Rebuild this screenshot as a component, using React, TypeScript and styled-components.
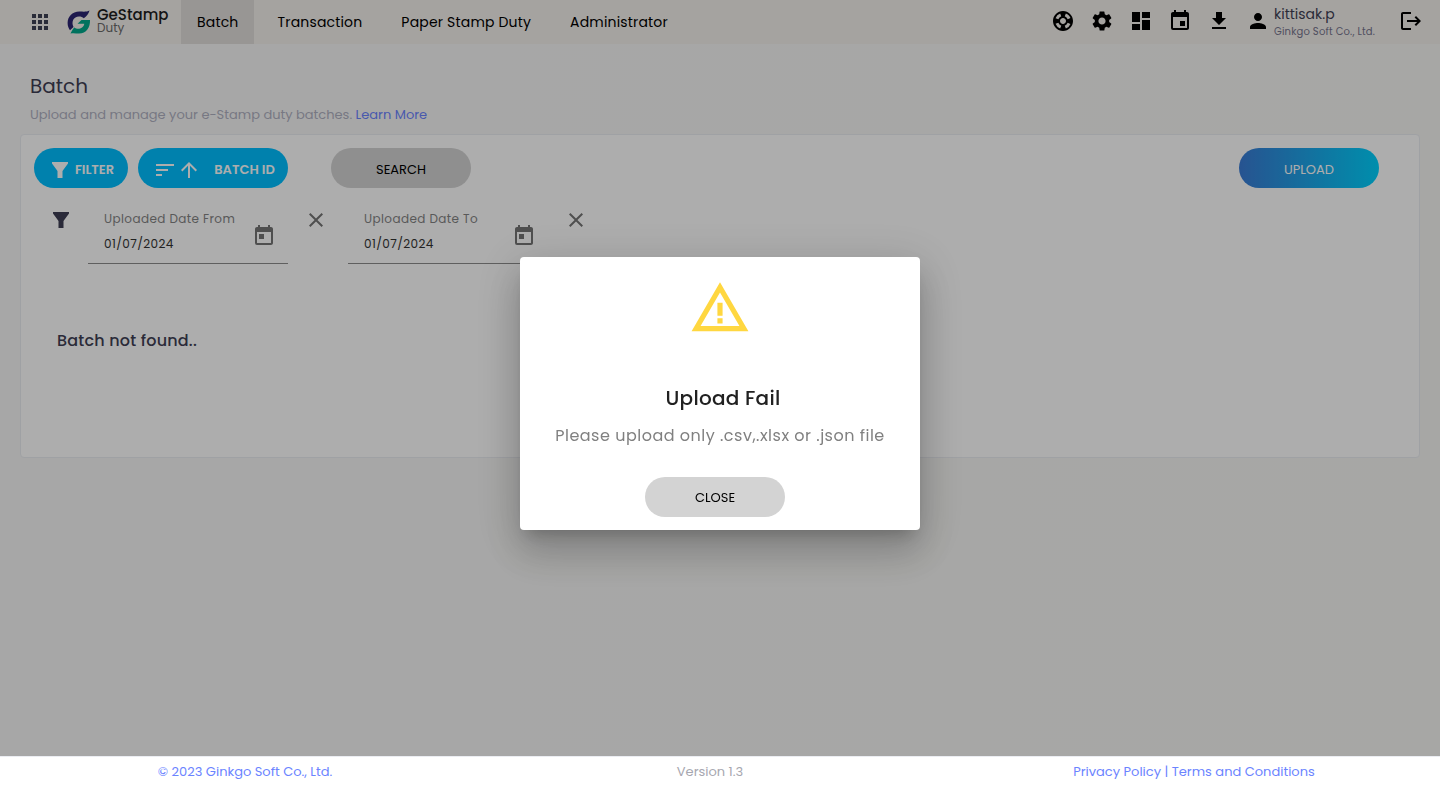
import React from "react";
import styled, { createGlobalStyle, css } from "styled-components";
import {
  MdApps, MdSettings, MdDashboard, MdEvent, MdFileDownload, MdPerson, MdLogout,
  MdSort, MdArrowUpward, MdToday, MdClose, MdOutlineSupport,
} from "react-icons/md";

const GlobalStyle = createGlobalStyle`
  *, *::before, *::after { box-sizing: border-box; }
  body { margin: 0; font-family: Poppins, Inter, "Open Sans", sans-serif; font-size: 13px; color: #3f3f54; }
  h1, h2, p { margin: 0; font-weight: 400; }
  button, input { font-family: inherit; }
  button { border: 0; background: none; padding: 0; cursor: pointer; color: inherit; }
  a { color: #6b84ff; text-decoration: none; }
`;

const Page = styled.div`
  min-height: 100vh;
  display: flex;
  flex-direction: column;
  background: linear-gradient(90deg, #f7f7f7, #f7f7f4);
`;

const Header = styled.header`
  height: 44px;
  padding: 0 17px 0 28px;
  display: flex;
  align-items: center;
  background: #f4f0ec;
`;

const IconButton = styled.button<{ $color?: string }>`
  display: flex;
  flex: none;
  font-size: 24px;
  color: ${(p) => p.$color ?? "#000"};
`;

const Brand = styled.a`
  display: flex;
  align-items: center;
  gap: 6px;
  width: 102px;
  margin: 0 12px 0 15px;

  svg {
    flex: none;
  }
`;

const BrandText = styled.span`
  display: flex;
  flex-direction: column;
  padding-bottom: 2px;
`;

const BrandName = styled.span`
  font-size: 15px;
  line-height: 14px;
  font-weight: 500;
  color: #1c1c1c;
`;

const BrandSub = styled.span`
  font-size: 12px;
  line-height: 12px;
  color: #6b6b6b;
`;

const Nav = styled.nav`
  display: flex;
  gap: 7px;
  flex: 1;
`;

const NavLink = styled.a<{ $active?: boolean }>`
  height: 44px;
  padding: 0 16px;
  line-height: 44px;
  font-size: 14px;
  letter-spacing: 0.0125em;
  color: #000;
  white-space: nowrap;
  background: ${(p) => (p.$active ? "#e1deda" : "transparent")};
`;

const Tools = styled.div`
  display: flex;
  align-items: center;
  gap: 15px;
  padding-bottom: 2px;
`;

const User = styled.div`
  display: flex;
  align-items: center;
  gap: 4px;
  width: 138px;
`;

const UserText = styled.div`
  padding-top: 4px;
`;

const UserName = styled.div`
  font-size: 14px;
  line-height: 18px;
`;

const Company = styled.div`
  font-size: 10px;
  line-height: 18px;
  letter-spacing: 0.0178em;
  color: #74748c;
  white-space: nowrap;
`;

const Main = styled.main`
  flex: 1;
  padding: 30px 20px;
`;

const Title = styled.h1`
  padding-left: 10px;
  font-size: 20px;
  line-height: 24px;
`;

const Intro = styled.p`
  padding: 7px 10px 9px;
  font-size: 13px;
  line-height: 20px;
  color: #b0b1c2;
`;

const Card = styled.section`
  min-height: 324px;
  padding: 13px;
  background: #fff;
  border: 1px solid #ebedf2;
  border-radius: 4px;
`;

const Toolbar = styled.div`
  display: flex;
  gap: 10px;
  padding-right: 27px;
`;

const pill = css`
  height: 40px;
  padding-top: 3px;
  border-radius: 20px;
  font-size: 13px;
  display: flex;
  align-items: center;
  justify-content: center;
`;

const ChipButton = styled.button<{ $width: number; $gap: number }>`
  ${pill}
  width: ${(p) => p.$width}px;
  padding-left: 2px;
  gap: ${(p) => p.$gap}px;
  background: #00bfff;
  color: #fff;
  font-weight: 600;
`;

const SortIcons = styled.span`
  display: flex;
  font-size: 24px;
`;

const ActionButton = styled.button<{ $primary?: boolean }>`
  ${pill}
  width: 140px;
  color: ${(p) => (p.$primary ? "#fff" : "#000")};
  background: ${(p) => (p.$primary ? "linear-gradient(90deg, #3a7bd5, #00d2ff)" : "lightgray")};
`;

const SearchSlot = styled.div`
  flex: 1;
  padding-left: 33px;
`;

const Filters = styled.div`
  display: flex;
  align-items: flex-start;
  gap: 16px;
  padding: 20px 17px 0;
`;

const FilterMark = styled.div`
  display: flex;
  width: 21px;
  padding-top: 2px;
`;

const Field = styled.div`
  width: 200px;
  height: 56px;
  padding: 0 12px 0 16px;
  display: flex;
  align-items: center;
  justify-content: space-between;
  border-bottom: 1px solid #8c8c8c;
`;

const FieldText = styled.div`
  display: flex;
  flex-direction: column;
  gap: 5px;
  padding-bottom: 9px;
`;

const Label = styled.label`
  font-size: 12px;
  line-height: 20px;
  letter-spacing: 0.0333em;
  color: #848484;
  white-space: nowrap;
`;

const DateInput = styled.input`
  width: 120px;
  height: 20px;
  padding: 0;
  border: 0;
  background: none;
  font-size: 12px;
  letter-spacing: 0.0333em;
  color: #333;
`;

const ClearSlot = styled.div`
  display: flex;
  width: 28px;
`;

const Empty = styled.p`
  padding: 65px 23px 0;
  font-size: 16px;
  line-height: 24px;
  font-weight: 500;
  letter-spacing: 0.0125em;
`;

const Footer = styled.footer`
  position: relative;
  z-index: 3;
  height: 30px;
  display: grid;
  grid-template-columns: 490fr 440fr 510fr;
  align-items: center;
  justify-items: center;
  background: #fff;
  border-top: 1px solid #ebedf2;
  color: #a7a7b0;
`;

const Legal = styled.span`
  padding-left: 18px;
`;

const Backdrop = styled.div`
  position: fixed;
  inset: 0;
  z-index: 2;
  display: flex;
  align-items: center;
  justify-content: center;
  background: rgba(0, 0, 0, 0.32);
`;

const Dialog = styled.div`
  width: 400px;
  padding: 20px 10px 13px;
  display: flex;
  flex-direction: column;
  align-items: center;
  background: #fff;
  border-radius: 4px;
  box-shadow: 0 11px 15px -7px rgba(0, 0, 0, 0.2), 0 24px 38px 3px rgba(0, 0, 0, 0.14),
    0 9px 46px 8px rgba(0, 0, 0, 0.12);
`;

const DialogTitle = styled.h2`
  margin-top: 43px;
  padding-left: 6px;
  font-size: 20px;
  line-height: 32px;
  font-weight: 500;
  letter-spacing: 0.0125em;
  color: #212121;
`;

const DialogText = styled.p`
  margin: 10px 0 29px;
  font-size: 16px;
  line-height: 24px;
  letter-spacing: 0.03125em;
  color: #808080;
  white-space: nowrap;
`;

const DialogActions = styled.div`
  padding-right: 10px;
`;

const Funnel = () => (
  <svg width="20" height="20" viewBox="0 0 20 20" fill="currentColor" aria-hidden="true">
    <path d="M2 2h16v1.500L12.500 11v7h-5v-7L2 3.500z" />
  </svg>
);

const WarningIcon = () => (
  <svg width="62" height="62" viewBox="0 0 24 24" fill="#ffd740" aria-hidden="true">
    <path d="M12 5.990L19.530 19H4.470L12 5.990M12 2L1 21h22L12 2zm1 14h-2v2h2v-2zm0-6h-2v5h2v-5z" />
  </svg>
);

const LogoMark = () => (
  <svg width="24" height="26" viewBox="0 0 24 26" aria-hidden="true">
    <path d="M22.500 1.500C20 3 17.500 2.600 12.500 2.600C5 2.600 .6 8 .6 14C.6 17 1.600 19.500 3 21.200L6.500 18C4 13 6.500 7.600 12 7.600C14 7.600 15.500 8.300 16.800 9.200C19.500 7.500 21.500 5 22.500 1.500z" fill="#2b2472" />
    <path d="M10.500 14.800L14.500 11H23C23.300 18.500 19.500 24.500 12 24.500C9 24.500 6.500 23.800 3.500 24.500C4.500 22.500 5.500 20.500 7.200 18.600C10.500 21 16.500 20 17.300 14.800z" fill="#00a88b" />
  </svg>
);

const tabs = ["Batch", "Transaction", "Paper Stamp Duty", "Administrator"];

const tools = [
  { label: "Support", Icon: MdOutlineSupport },
  { label: "Settings", Icon: MdSettings },
  { label: "Dashboard", Icon: MdDashboard },
  { label: "Calendar", Icon: MdEvent },
  { label: "Downloads", Icon: MdFileDownload },
];

const DateFilter = ({ id, label }: { id: string; label: string }) => (
  <>
    <Field>
      <FieldText>
        <Label htmlFor={id}>{label}</Label>
        <DateInput id={id} defaultValue="01/07/2024" />
      </FieldText>
      <IconButton $color="#757575" aria-label={`Pick ${label}`}><MdToday /></IconButton>
    </Field>
    <ClearSlot>
      <IconButton $color="#757575" aria-label={`Remove ${label}`}><MdClose /></IconButton>
    </ClearSlot>
  </>
);

export default function App() {
  return (
    <Page>
      <GlobalStyle />
      <Header>
        <IconButton $color="#3f4254" aria-label="Apps"><MdApps /></IconButton>
        <Brand href="#">
          <LogoMark />
          <BrandText>
            <BrandName>GeStamp</BrandName>
            <BrandSub>Duty</BrandSub>
          </BrandText>
        </Brand>
        <Nav>
          {tabs.map((tab, i) => (
            <NavLink key={tab} href="#" $active={i === 0}>{tab}</NavLink>
          ))}
        </Nav>
        <Tools>
          {tools.map(({ label, Icon }) => (
            <IconButton key={label} aria-label={label}><Icon /></IconButton>
          ))}
          <User>
            <MdPerson size={24} color="#000" />
            <UserText>
              <UserName>kittisak.p</UserName>
              <Company>Ginkgo Soft Co., Ltd.</Company>
            </UserText>
          </User>
          <IconButton aria-label="Log out"><MdLogout /></IconButton>
        </Tools>
      </Header>
      <Main>
        <Title>Batch</Title>
        <Intro>
          Upload and manage your e-Stamp duty batches. <a href="#">Learn More</a>
        </Intro>
        <Card>
          <Toolbar>
            <ChipButton $width={94} $gap={5}><Funnel />FILTER</ChipButton>
            <ChipButton $width={150} $gap={13}>
              <SortIcons><MdSort /><MdArrowUpward /></SortIcons>BATCH ID
            </ChipButton>
            <SearchSlot><ActionButton>SEARCH</ActionButton></SearchSlot>
            <ActionButton $primary>UPLOAD</ActionButton>
          </Toolbar>
          <Filters>
            <FilterMark><Funnel /></FilterMark>
            <DateFilter id="date-from" label="Uploaded Date From" />
            <DateFilter id="date-to" label="Uploaded Date To" />
          </Filters>
          <Empty>Batch not found..</Empty>
        </Card>
      </Main>
      <Footer>
        <a href="#">© 2023 Ginkgo Soft Co., Ltd.</a>
        <span>Version 1.3</span>
        <Legal><a href="#">Privacy Policy</a> <a href="#">|</a> <a href="#">Terms and Conditions</a></Legal>
      </Footer>
      <Backdrop>
        <Dialog role="dialog" aria-modal="true" aria-labelledby="dialog-title">
          <WarningIcon />
          <DialogTitle id="dialog-title">Upload Fail</DialogTitle>
          <DialogText>Please upload only .csv,.xlsx or .json file</DialogText>
          <DialogActions><ActionButton>CLOSE</ActionButton></DialogActions>
        </Dialog>
      </Backdrop>
    </Page>
  );
}
